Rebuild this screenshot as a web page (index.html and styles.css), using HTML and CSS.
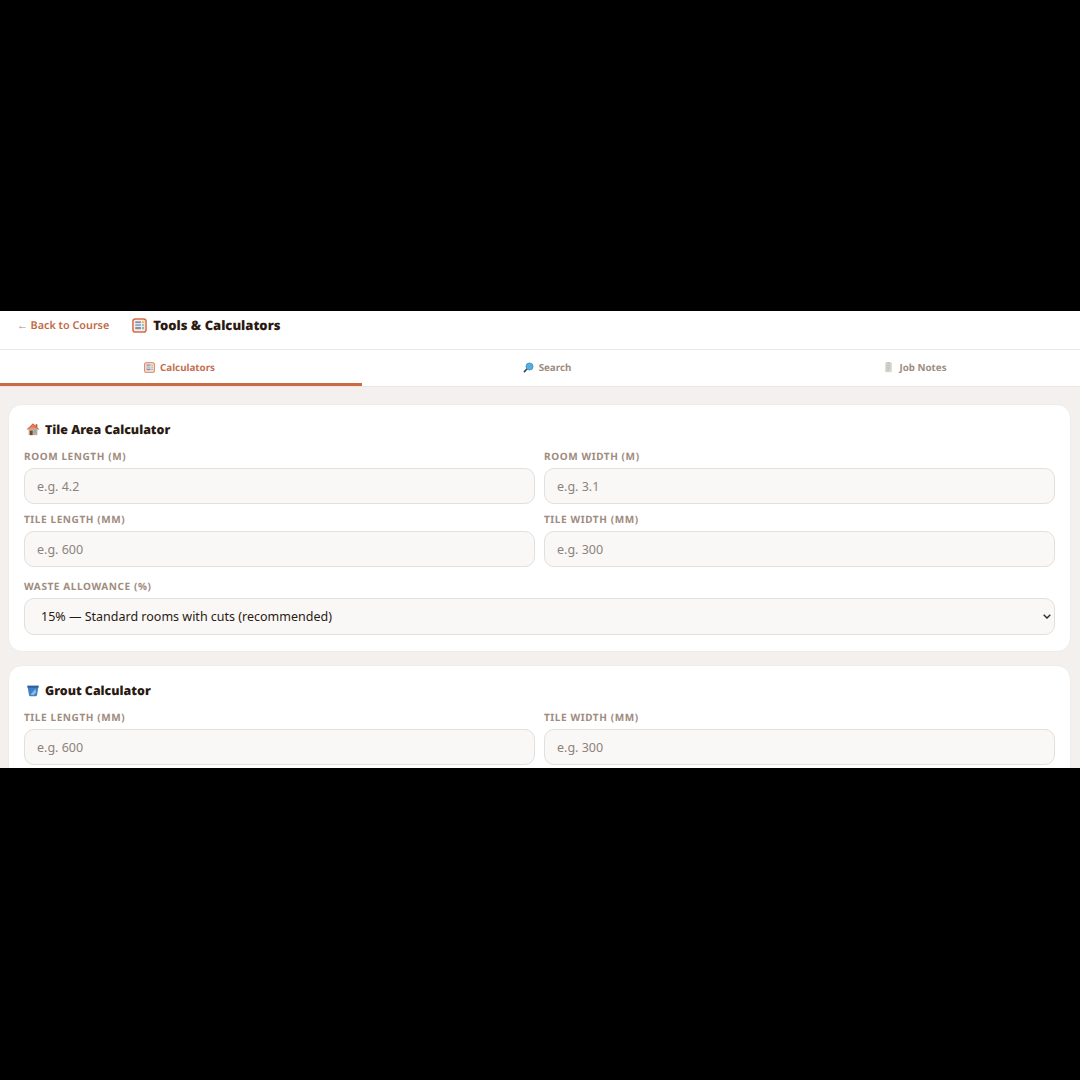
FILE: index.html
```html
<!DOCTYPE html>
<html lang="en">
<head>
    <meta charset="UTF-8">
    <meta name="viewport" content="width=device-width, initial-scale=1.0">
    <title>Tools &amp; Calculators</title>
    <link rel="stylesheet" href="styles.css">
</head>
<body>
    <div class="screen">
        <header class="topbar">
            <a class="back-link" href="#"><span class="arrow">←</span> Back to Course</a>
            <div class="page-title">
                <svg class="icon icon-title" viewBox="0 0 16 16">
                    <rect x="1" y="1" width="14" height="14" rx="2.5" fill="#fbeee6" stroke="#d9694a" stroke-width="1.6"/>
                    <rect x="3.5" y="3.5" width="6" height="2" fill="#8d8fa8"/>
                    <rect x="10.5" y="3.5" width="2.5" height="2" fill="#e8b66a"/>
                    <rect x="3.5" y="6.5" width="6" height="2" fill="#7fb3d8"/>
                    <rect x="10.5" y="6.5" width="2.5" height="2" fill="#9cc7a0"/>
                    <rect x="3.5" y="9.5" width="6" height="2.5" fill="#8d8fa8"/>
                    <rect x="10.5" y="9.5" width="2.5" height="2.5" fill="#7fb3d8"/>
                </svg>
                <span>Tools &amp; Calculators</span>
            </div>
        </header>

        <nav class="tabs">
            <a class="tab active" href="#">
                <svg class="icon" viewBox="0 0 16 16">
                    <rect x="1" y="1" width="14" height="14" rx="2" fill="#fbeee6" stroke="#d9775a" stroke-width="1.5"/>
                    <rect x="3.5" y="3.5" width="6" height="2" fill="#8d8fa8"/>
                    <rect x="10.5" y="3.5" width="2.5" height="2" fill="#e8b66a"/>
                    <rect x="3.5" y="6.5" width="6" height="2" fill="#9cb9d0"/>
                    <rect x="10.5" y="6.5" width="2.5" height="2" fill="#9cc7a0"/>
                    <rect x="3.5" y="9.5" width="6" height="2.5" fill="#8d8fa8"/>
                    <rect x="10.5" y="9.5" width="2.5" height="2.5" fill="#9cb9d0"/>
                </svg>
                Calculators
            </a>
            <a class="tab" href="#">
                <svg class="icon" viewBox="0 0 16 16">
                    <path d="M6.5 9.5 L2 14" stroke="#444" stroke-width="2.4" stroke-linecap="round"/>
                    <circle cx="9.5" cy="6.5" r="5.2" fill="#55aedd" stroke="#3d88b5" stroke-width="1"/>
                </svg>
                Search
            </a>
            <a class="tab" href="#">
                <svg class="icon" viewBox="0 0 16 16">
                    <rect x="3" y="1" width="10" height="14" rx="1" fill="#dcdcd6"/>
                    <rect x="5" y="0.5" width="6" height="2" fill="#b9b9b2"/>
                    <path d="M5 5h6M5 7.5h6M5 10h6M5 12.5h4" stroke="#a9a9a2" stroke-width="0.9"/>
                </svg>
                Job Notes
            </a>
        </nav>

        <main class="content">
            <section class="card">
                <h2 class="card-title">
                    <svg class="icon icon-card" viewBox="0 0 16 16">
                        <rect x="3" y="7" width="10" height="8" fill="#c9a58c"/>
                        <path d="M0.5 8.5 L8 1.5 L15.5 8.5 L13.5 8.5 L8 4 L2.5 8.5 Z" fill="#d9653f"/>
                        <path d="M3 7 L8 3 L13 7 Z" fill="#e2805c"/>
                        <rect x="4.5" y="10" width="3" height="5" fill="#6b4a3a"/>
                        <rect x="9" y="9.5" width="3" height="3" fill="#6db7dc"/>
                        <rect x="11" y="2.5" width="2" height="3.5" fill="#a9603f"/>
                    </svg>
                    Tile Area Calculator
                </h2>
                <div class="form-grid">
                    <div class="form-group">
                        <label>Room Length (m)</label>
                        <input type="text" placeholder="e.g. 4.2">
                    </div>
                    <div class="form-group">
                        <label>Room Width (m)</label>
                        <input type="text" placeholder="e.g. 3.1">
                    </div>
                    <div class="form-group">
                        <label>Tile Length (mm)</label>
                        <input type="text" placeholder="e.g. 600">
                    </div>
                    <div class="form-group">
                        <label>Tile Width (mm)</label>
                        <input type="text" placeholder="e.g. 300">
                    </div>
                    <div class="form-group full">
                        <label>Waste Allowance (%)</label>
                        <select>
                            <option>15% — Standard rooms with cuts (recommended)</option>
                        </select>
                    </div>
                </div>
            </section>

            <section class="card">
                <h2 class="card-title">
                    <svg class="icon icon-card" viewBox="0 0 16 16">
                        <path d="M1.5 3 H14.5 L12.5 14 Q12.3 15 11 15 H5 Q3.7 15 3.5 14 Z" fill="#3f7fc4"/>
                        <path d="M1.5 3 H14.5 L14 5.5 H2 Z" fill="#2f5f9c"/>
                        <path d="M5 13 L11 6.5 L11.5 11 L8.5 14 Z" fill="#86bde8"/>
                    </svg>
                    Grout Calculator
                </h2>
                <div class="form-grid">
                    <div class="form-group">
                        <label>Tile Length (mm)</label>
                        <input type="text" placeholder="e.g. 600">
                    </div>
                    <div class="form-group">
                        <label>Tile Width (mm)</label>
                        <input type="text" placeholder="e.g. 300">
                    </div>
                </div>
            </section>
        </main>
    </div>
</body>
</html>
```

FILE: styles.css
```css
html, body {
    margin: 0;
    background: #000;
}
body {
    padding-top: 311px;
    height: 769px;
    box-sizing: border-box;
    font-family: "Noto Sans", "Open Sans", sans-serif;
    color: #2a1a12;
    text-rendering: geometricPrecision;
}
.screen {
    height: 457px;
    overflow: hidden;
    background: #f3f0ed;
}
.icon {
    width: 11px;
    height: 11px;
    flex: none;
}
.topbar {
    display: flex;
    align-items: center;
    gap: 23px;
    height: 28px;
    padding: 0 0 10px 17px;
    background: #fff;
    border-bottom: 1px solid #ebe8e5;
    box-sizing: content-box;
}
.back-link {
    color: #bf6a46;
    font-size: 10.8px;
    font-weight: 600;
    line-height: 15px;
    text-decoration: none;
}
.back-link .arrow {
    color: #a08c80;
}
.page-title {
    display: flex;
    align-items: center;
    gap: 6px;
    font-size: 13px;
    font-weight: 900;
    color: #2a1a12;
}
.icon-title {
    width: 15px;
    height: 15px;
}
.tabs {
    display: grid;
    grid-template-columns: 362px 370px 366px;
    height: 37px;
    background: #fff;
    border-bottom: 1px solid #e9e6e3;
    box-sizing: border-box;
}
.tab {
    display: flex;
    align-items: center;
    justify-content: center;
    gap: 5px;
    height: 36px;
    box-sizing: border-box;
    padding-bottom: 2px;
    color: #a08c80;
    font-size: 9.8px;
    font-weight: 700;
    text-decoration: none;
}
.tab.active {
    color: #c4704f;
    border-bottom: 3px solid #cc6b43;
    padding: 1px 3px 0 0;
}
.content {
    display: flex;
    flex-direction: column;
    gap: 13px;
    padding: 17px 9px 0 8px;
}
.card {
    padding: 15px 15px 16px;
    background: #fff;
    border: 1px solid #efece9;
    border-radius: 14px;
}
.card-title {
    display: flex;
    align-items: center;
    gap: 5px;
    margin: 0 0 11px;
    height: 18px;
    font-size: 12.4px;
    font-weight: 900;
    color: #2a1a12;
}
.icon-card {
    width: 14px;
    height: 14px;
    margin-left: 2px;
}
.form-grid {
    display: grid;
    grid-template-columns: 1fr 1fr;
    gap: 8px 9px;
}
.form-group.full {
    grid-column: 1 / -1;
    margin-top: 4px;
}
label {
    display: block;
    margin-bottom: 5px;
    color: #a08c80;
    font-size: 10px;
    font-weight: 700;
    letter-spacing: 0.6px;
    line-height: 14px;
    text-transform: uppercase;
}
input, select {
    display: block;
    width: 100%;
    height: 36px;
    box-sizing: border-box;
    padding: 0 12px;
    background-color: #faf8f6;
    border: 1px solid #e3dfda;
    border-radius: 10px;
    font-family: inherit;
    font-size: 12.5px;
    color: #2a1a12;
}
input::placeholder {
    color: #8d837b;
}
select {
    height: 37px;
    padding-left: 16px;
    appearance: none;
    background-image: url("data:image/svg+xml,%3Csvg xmlns='http://www.w3.org/2000/svg' viewBox='0 0 8 5'%3E%3Cpath d='M.7.7 4 4 7.3.7' fill='none' stroke='%23333' stroke-width='1.5'/%3E%3C/svg%3E");
    background-repeat: no-repeat;
    background-position: right 3px center;
    background-size: 8px 5px;
}
```
